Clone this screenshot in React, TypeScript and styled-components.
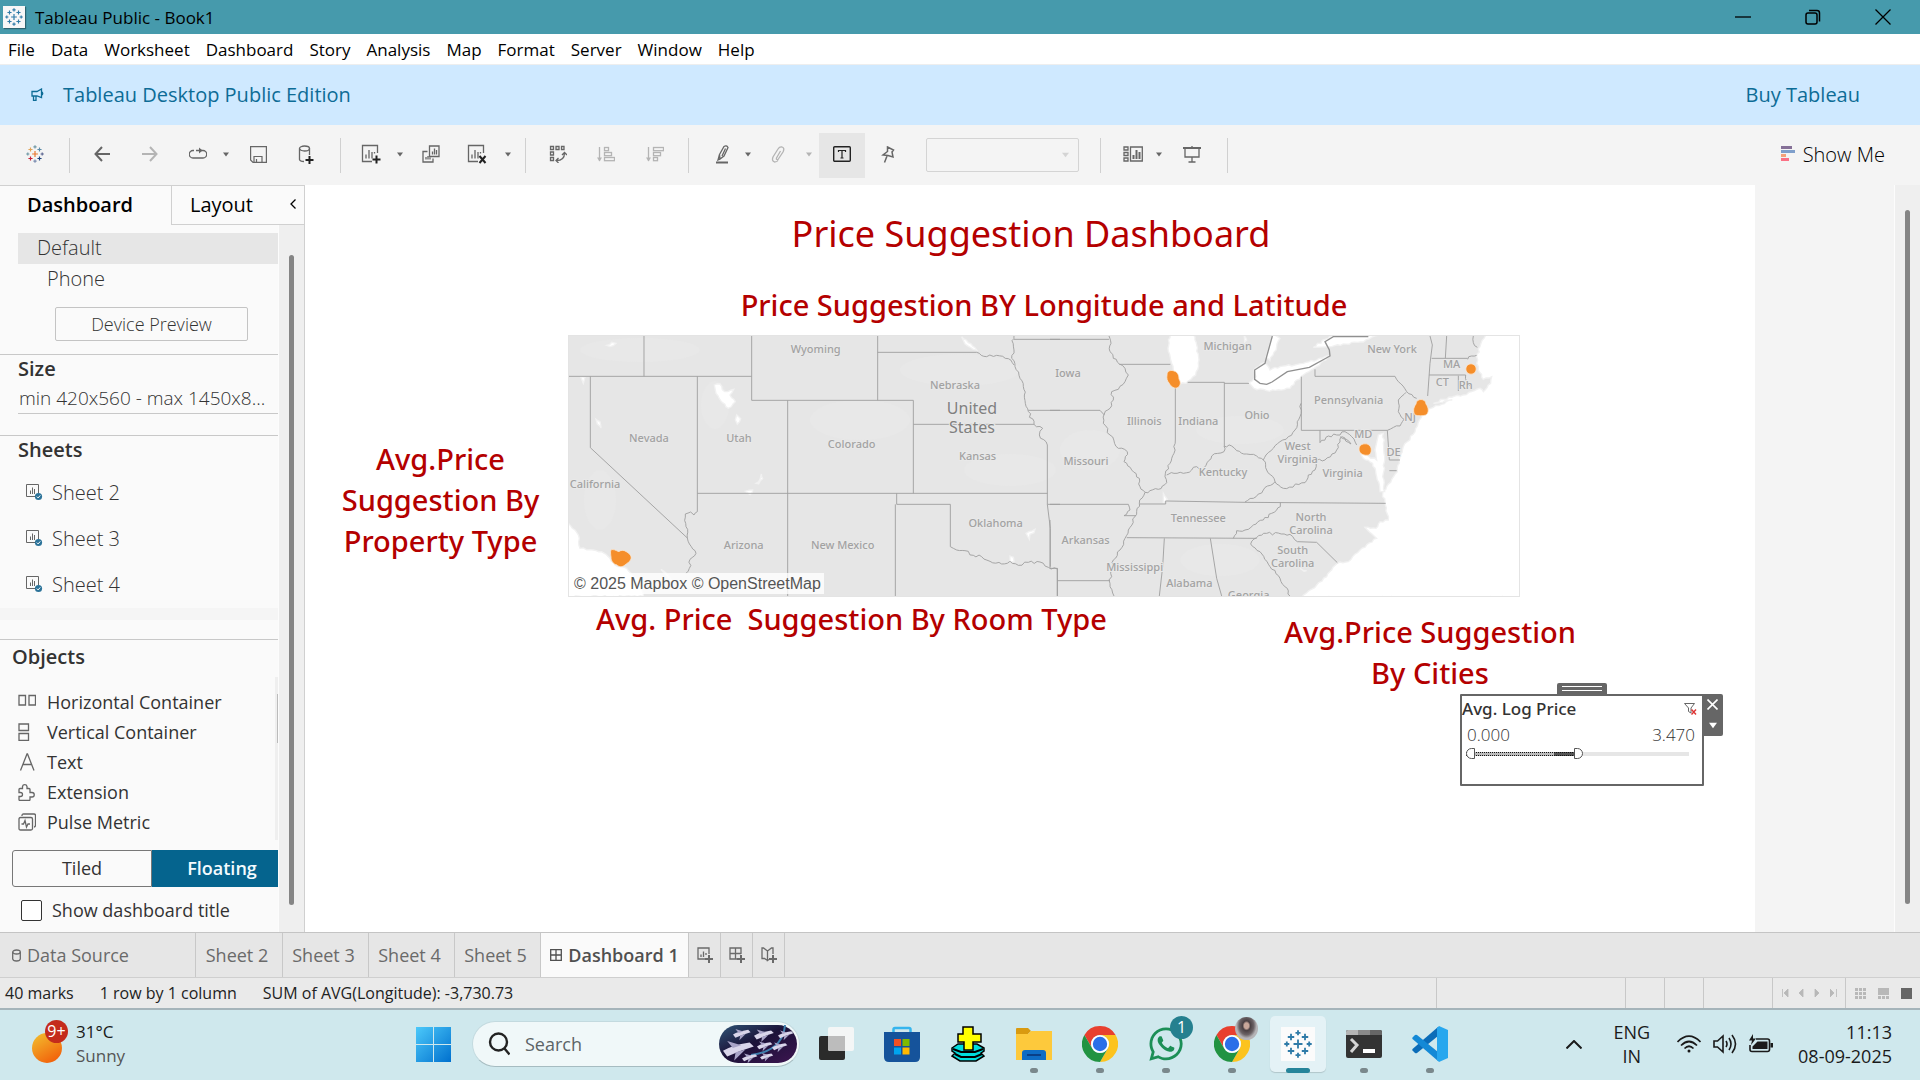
import React, { useState } from "react";
import styled, { createGlobalStyle, css } from "styled-components";
import { FaWhatsapp } from "react-icons/fa";

const UI = `"Open Sans", "Noto Sans", sans-serif`;
const HEADING = `"Noto Sans", "Open Sans", sans-serif`;

const GlobalStyle = createGlobalStyle`
  *, *::before, *::after { box-sizing: border-box; }
  body { margin: 0; font-family: ${UI}; font-size: 17px; color: #333; background: #fff; }
  button, input, select { font: inherit; color: inherit; }
  button { background: none; border: 0; padding: 0; margin: 0; }
  h1, h2, h3, p, ul, dl, dd { margin: 0; padding: 0; font-weight: inherit; font-size: inherit; }
  ul { list-style: none; }
  a { color: inherit; text-decoration: none; }
  svg { display: block; flex: none; }
`;

const Window = styled.div`
  display: flex;
  flex-direction: column;
  min-height: 100vh;
`;

/* ---------- title bar, menu, banner ---------- */

const TitleBar = styled.header`
  display: flex;
  align-items: center;
  height: 34px;
  padding-left: 3px;
  gap: 10px;
  background: #469aac;
  color: #000;
`;
const AppBadge = styled.span`
  display: flex;
  align-items: center;
  justify-content: center;
  width: 22px;
  height: 22px;
  background: #f7f7f7;
  box-shadow: 1px 1px 1px rgba(0, 0, 0, 0.35);
`;
const WindowControls = styled.div`
  display: flex;
  margin: 0 2px 0 auto;
`;
const WindowButton = styled.button`
  display: flex;
  align-items: center;
  justify-content: center;
  width: 70px;
  height: 34px;
`;
const MenuBar = styled.nav`
  display: flex;
  align-items: center;
  height: 31px;
  padding: 1px 8px 0;
  gap: 16px;
  border-bottom: 1px solid #eee;
  background: #fff;
  color: #000;
`;
const MenuItem = styled.button`
  line-height: 24px;
`;
const Banner = styled.div`
  display: flex;
  align-items: center;
  justify-content: space-between;
  height: 60px;
  padding: 0 60px 2px 31px;
  background: #cfe9ff;
  color: #0d6c96;
  font-size: 20px;
`;
const BannerTitle = styled.div`
  display: flex;
  align-items: center;
  gap: 18px;
`;

/* ---------- toolbar ---------- */

const ToolbarRow = styled.div`
  display: flex;
  align-items: center;
  height: 60px;
  padding: 0 35px 0 12px;
  background: #f4f4f4;
`;
const Tool = styled.button<{ $w: number; $on?: boolean; $dim?: boolean }>`
  display: flex;
  align-items: center;
  justify-content: center;
  flex: none;
  width: ${(p) => p.$w}px;
  height: 45px;
  padding-bottom: 2px;
  color: ${(p) => (p.$dim ? "#b4b4b4" : "#666")};
  ${(p) => p.$on && css`margin-left: 5px; background: #e6e6e6; color: #222;`}
`;
const Divider = styled.span`
  flex: none;
  width: 1px;
  height: 35px;
  margin: 0 11px;
  background: #d0d0d0;
`;
const FitBox = styled.div`
  position: relative;
  flex: none;
  width: 153px;
  margin: 0 10px 0 15px;
`;
const FitSelect = styled.select`
  display: block;
  width: 100%;
  height: 34px;
  appearance: none;
  border: 1px solid #d4d4d4;
  border-radius: 2px;
  background: #f4f4f4;
  opacity: 1;
`;
const SelectCaret = styled.span`
  position: absolute;
  right: 10px;
  top: 14px;
  color: #d4d4d4;
`;
const ShowMe = styled.button`
  display: flex;
  align-items: center;
  gap: 8px;
  margin-left: auto;
  padding-bottom: 2px;
  color: #000;
  font-size: 20px;
  font-weight: 300;
`;

/* ---------- main split ---------- */

const Main = styled.main`
  display: flex;
  flex: 1;
  min-height: 0;
`;
const Sidebar = styled.aside`
  display: flex;
  flex-direction: column;
  flex: none;
  width: 305px;
  border-right: 1px solid #d0d0d0;
  background: #fafafa;
`;
const PaneTabs = styled.div`
  display: flex;
  height: 40px;
  border-top: 1px solid #d0d0d0;
  font-size: 20px;
  color: #000;
`;
const PaneTab = styled.button<{ $active?: boolean }>`
  display: flex;
  align-items: center;
  justify-content: space-between;
  flex: ${(p) => (p.$active ? "0 0 171px" : 1)};
  padding: ${(p) => (p.$active ? "0 0 3px 27px" : "0 8px 2px 18px")};
  font-weight: ${(p) => (p.$active ? 600 : 400)};
  border: ${(p) => (p.$active ? 0 : "1px solid #d0d0d0")};
  border-width: ${(p) => (p.$active ? 0 : "0 0 1px 1px")};
`;
const PaneScroll = styled.div`
  display: flex;
  flex: 1;
`;
const PaneBody = styled.div`
  flex: 1;
  min-width: 0;
  overflow: hidden;
`;
const ScrollTrack = styled.div<{ $inset: string }>`
  flex: none;
  display: flex;
  justify-content: center;
  width: 26px;
  padding: ${(p) => p.$inset};
  border-left: 1px solid #fcfcfc;
  background: #efefef;
`;
const ScrollThumb = styled.span`
  width: 5px;
  border-radius: 3px;
  background: #858585;
`;
const DeviceSection = styled.section`
  padding: 8px 0 13px;
  font-size: 20px;
  font-weight: 300;
`;
const DeviceRow = styled.button<{ $active?: boolean }>`
  display: block;
  width: calc(100% - 18px);
  height: 31px;
  margin-left: 18px;
  padding: 0 0 2px ${(p) => (p.$active ? 19 : 29)}px;
  text-align: left;
  line-height: 27px;
  background: ${(p) => (p.$active ? "#e6e6e6" : "none")};
`;
const PreviewButton = styled.button`
  display: block;
  width: 193px;
  height: 34px;
  margin: 12px 0 0 55px;
  border: 1px solid #c4c4c4;
  border-radius: 2px;
  font-size: 18px;
`;
const Section = styled.section`
  border-top: 1px solid #c8c8c8;
`;
const SectionTitle = styled.h2<{ $inset?: number }>`
  padding-left: ${(p) => p.$inset ?? 18}px;
  font-size: 20px;
  font-weight: 600;
  line-height: ${(p) => (p.$inset ? 34 : 28)}px;
`;
const SizeValue = styled.button`
  display: block;
  width: calc(100% - 18px);
  height: 31px;
  margin: 0 0 21px 18px;
  padding: 0 6px 0 1px;
  border-bottom: 1px solid #c8c8c8;
  font-size: 19px;
  font-weight: 300;
  text-align: left;
  line-height: 28px;
  white-space: nowrap;
`;
const SheetList = styled.ul`
  padding-top: 6px;
  font-size: 20px;
  font-weight: 300;
`;
const SheetItem = styled.li`
  display: flex;
  align-items: center;
  gap: 9px;
  height: 46px;
  padding: 0 0 2px 26px;
`;
const ListFoot = styled.div`
  height: 12px;
  margin-bottom: 19px;
  background: #f5f5f5;
`;
const ObjectArea = styled.div`
  display: flex;
  margin-top: 3px;
  padding-bottom: 10px;
`;
const ObjectList = styled.ul`
  flex: 1;
  padding-top: 10px;
  font-size: 18px;
`;
const ObjectItem = styled.li`
  display: flex;
  align-items: center;
  gap: 11px;
  height: 30px;
  padding-left: 18px;
  svg {
    color: #666;
  }
`;
const ThinTrack = styled.span`
  width: 3px;
  height: 163px;
  padding: 17px 0 97px 2px;
  background: #efefef;
  &::before {
    content: "";
    display: block;
    height: 100%;
    background: #bbb;
  }
`;
const ModeSwitch = styled.div`
  display: flex;
  padding-left: 12px;
  height: 37px;
  font-size: 18px;
`;
const ModeButton = styled.button<{ $on?: boolean }>`
  flex: ${(p) => (p.$on ? 1 : "0 0 140px")};
  border: 1px solid ${(p) => (p.$on ? "#05648e" : "#777")};
  border-radius: ${(p) => (p.$on ? 0 : "3px 0 0 3px")};
  background: ${(p) => (p.$on ? "#05648e" : "none")};
  color: ${(p) => (p.$on ? "#f3fbff" : "#333")};
  font-weight: ${(p) => (p.$on ? 600 : 400)};
  padding: 0 0 2px ${(p) => (p.$on ? 14 : 0)}px;
`;
const TitleToggle = styled.label`
  display: flex;
  align-items: center;
  gap: 10px;
  padding: 9px 0 6px 21px;
  font-size: 18px;
  line-height: 29px;
`;
const CheckBox = styled.input`
  appearance: none;
  width: 21px;
  height: 21px;
  margin: 0;
  border: 1px solid #333;
  border-radius: 2px;
  background: #fff;
`;

/* ---------- dashboard canvas ---------- */

const Canvas = styled.div`
  flex: 1;
  min-width: 0;
  background: #fff;
  color: #b40000;
  font-family: ${HEADING};
  font-weight: 500;
`;
const Gutter = styled.div`
  flex: none;
  width: 139px;
  background: #f4f4f4;
`;
const DashTitle = styled.h1`
  padding: 24px 0 1px 2px;
  font-size: 36px;
  font-weight: 400;
  line-height: 50px;
  text-align: center;
`;
const Zones = styled.div`
  display: grid;
  grid-template-columns: 263fr 952fr 235fr;
`;
const ZoneTitle = styled.h2`
  font-size: 29px;
  line-height: 41px;
  text-align: center;
  white-space: pre-line;
`;
const MapTitle = styled(ZoneTitle)`
  grid-column: 2;
  padding: 24px 0 10px;
`;
const SideTitle = styled(ZoneTitle)`
  grid-column: 1;
  align-self: center;
  padding: 66px 0 0 8px;
`;
const MapFrame = styled.figure`
  position: relative;
  margin: 0;
  border: 1px solid #e4e4e4;
`;
const MapCredit = styled.figcaption`
  position: absolute;
  left: 2px;
  bottom: 2px;
  padding: 0 3px;
  background: rgba(255, 255, 255, 0.78);
  color: #555;
  font: 16px/21px "Liberation Sans", Arial, sans-serif;
`;
const LowerZone = styled.div`
  grid-column: 2 / 4;
  display: flex;
  justify-content: space-between;
  padding: 1px 179px 1px 28px;
`;
const RoomTitle = styled(ZoneTitle)`
  white-space: pre;
`;
const CitiesTitle = styled(ZoneTitle)`
  padding-top: 13px;
`;
const FilterCard = styled.section`
  position: relative;
  width: 244px;
  height: 92px;
  margin: 0 51px 0 auto;
  border: 2px solid #666;
  border-radius: 1px;
  background: #fff;
  color: #333;
`;
const Grip = styled.button`
  position: absolute;
  left: 95px;
  top: -13px;
  width: 50px;
  height: 11px;
  border-radius: 2px 2px 0 0;
  background: #666;
  &::after {
    content: "";
    position: absolute;
    inset: 3px 5px;
    border: solid #fff;
    border-width: 1px 0;
  }
`;
const CardTools = styled.div`
  position: absolute;
  left: 240px;
  top: -2px;
  display: flex;
  flex-direction: column;
  width: 21px;
  border-radius: 0 2px 2px 0;
  background: #666;
`;
const CardTool = styled.button`
  display: flex;
  align-items: center;
  justify-content: center;
  height: 21px;
  padding-bottom: 1px;
  color: #fff;
`;
const FilterHead = styled.div`
  display: flex;
  align-items: center;
  justify-content: space-between;
  padding: 0 5px 1px 0;
  font-size: 17px;
  line-height: 26px;
`;
const FilterValues = styled.div`
  display: flex;
  justify-content: space-between;
  padding: 0 7px 0 5px;
  font-family: ${UI};
  font-size: 17px;
  font-weight: 300;
  line-height: 24px;
`;
const RangeBox = styled.div`
  position: relative;
  height: 13px;
  margin: 0 13px 0 4px;
`;
const RangeRail = styled.div`
  position: absolute;
  inset: 5px 0 4px 0;
  background: #e6e6e6;
`;
const RangeFill = styled.div`
  height: 100%;
  border: 1px dotted #111;
  border-width: 1px 0;
  background: linear-gradient(90deg, #bcbcbc 78%, #555 78%);
`;
const RangeInput = styled.input<{ $side: "low" | "high" }>`
  position: absolute;
  inset: 0;
  width: 100%;
  height: 13px;
  margin: 0;
  appearance: none;
  background: none;
  pointer-events: none;
  &::-webkit-slider-thumb {
    appearance: none;
    pointer-events: auto;
    width: 9px;
    height: 11px;
    border: 1px solid #555;
    border-radius: ${(p) => (p.$side === "low" ? "6px 0 0 6px" : "0 6px 6px 0")};
    background: #fff;
  }
`;

/* ---------- sheet tabs and status ---------- */

const SheetTabs = styled.nav`
  display: flex;
  height: 46px;
  border-top: 1px solid #c4c4c4;
  border-bottom: 1px solid #cfcfcf;
  background: #e6e6e6;
  font-size: 18px;
`;
const SheetTab = styled.button<{ $w: number; $active?: boolean; $start?: boolean }>`
  display: flex;
  align-items: center;
  justify-content: ${(p) => (p.$start ? "flex-start" : "center")};
  gap: 6px;
  flex: none;
  width: ${(p) => p.$w}px;
  padding-left: ${(p) => (p.$start ? 12 : 0)}px;
  padding-right: ${(p) => (p.$w < 100 && p.$w > 50 ? 4 : 0)}px;
  border-right: 1px solid #c8c8c8;
  background: ${(p) => (p.$active ? "#fafafa" : "none")};
  font-weight: ${(p) => (p.$active ? 600 : 400)};
  color: ${(p) => (p.$active ? "#505050" : "#6a6a6a")};
  white-space: nowrap;
`;
const StatusBar = styled.footer`
  display: flex;
  align-items: stretch;
  height: 32px;
  border-bottom: 2px solid #a5b4ba;
  background: #eaeaea;
  color: #222;
  font-size: 16px;
  line-height: 30px;
`;
const StatusText = styled.p`
  display: flex;
  gap: 26px;
  flex: 1;
  padding-left: 5px;
`;
const StatusCell = styled.div<{ $w: number }>`
  display: flex;
  align-items: center;
  justify-content: center;
  flex: none;
  width: ${(p) => p.$w}px;
  border-left: 1px solid #c8c8c8;
`;
const NavButton = styled.button`
  display: flex;
  align-items: center;
  justify-content: center;
  width: 16px;
  color: #b8b8b8;
`;
const ViewButton = styled.button`
  display: flex;
  justify-content: center;
  width: 23px;
`;

/* ---------- taskbar ---------- */

const Taskbar = styled.footer`
  display: flex;
  height: 70px;
  background: #cfe8ed;
  color: #1a1a1a;
`;
const Weather = styled.button`
  display: flex;
  align-items: center;
  gap: 6px;
  flex: none;
  width: 400px;
  padding: 0 0 2px 30px;
  text-align: left;
  line-height: 24px;
`;
const Muted = styled.span`
  display: block;
  color: #555;
`;
const AppSlot = styled.button`
  display: flex;
  flex: none;
  width: 66px;
  padding: 6px 5px 8px;
`;
const AppTile = styled.span<{ $active?: boolean; $running?: boolean }>`
  position: relative;
  display: flex;
  align-items: center;
  justify-content: center;
  width: 56px;
  height: 56px;
  border-radius: 5px;
  ${(p) => p.$active && css`background: #e4f2f6; box-shadow: 0 1px 1px rgba(0, 0, 0, 0.15);`}
  &::after {
    content: "";
    position: absolute;
    bottom: -1px;
    left: 50%;
    width: ${(p) => (p.$active ? 24 : 8)}px;
    height: 5px;
    border-radius: 3px;
    transform: translateX(-50%);
    background: ${(p) => (p.$active ? "#25849a" : p.$running ? "#7a888c" : "none")};
  }
`;
const SearchBox = styled.label`
  display: flex;
  align-items: center;
  gap: 15px;
  flex: none;
  width: 328px;
  height: 46px;
  margin: 11px 3px 0 6px;
  padding: 0 2px 0 15px;
  border: 1px solid #c3dadf;
  border-bottom-color: #a6bcc1;
  border-radius: 23px;
  background: #f0f8f9;
  font-size: 18px;
`;
const SearchInput = styled.input`
  flex: 1;
  min-width: 0;
  border: 0;
  padding: 0;
  background: none;
  &::placeholder {
    color: #5c6467;
    opacity: 1;
  }
`;
const Tray = styled.div`
  display: flex;
  align-items: center;
  margin-left: auto;
  padding: 0 28px 2px 0;
  font-size: 18px;
  line-height: 24px;
`;
const TrayButton = styled.button<{ $gap: number }>`
  display: flex;
  gap: 12px;
  align-items: center;
  margin-right: ${(p) => p.$gap}px;
  text-align: center;
`;
const Clock = styled.time`
  text-align: right;
`;
const Badged = styled.span`
  position: relative;
  display: block;
`;
const Badge = styled.span<{ $tone: string }>`
  position: absolute;
  top: -9px;
  right: -8px;
  width: 23px;
  height: 23px;
  border-radius: 50%;
  background: ${(p) => p.$tone};
  color: #fff;
  font-size: 16px;
  line-height: 23px;
  text-align: center;
`;
const WeatherCount = styled(Badge)`
  top: -3px;
  right: 2px;
`;

/* ---------- icons ---------- */

const Line = ({ w, h = w, children, sw = 1.3 }: { w: number; h?: number; sw?: number; children: React.ReactNode }) => (
  <svg width={w} height={h} viewBox={`0 0 ${w} ${h}`} fill="none" stroke="currentColor" strokeWidth={sw}>
    {children}
  </svg>
);

const Caret = ({ size = 6 }: { size?: number }) => (
  <svg width={size} height={size - 1} viewBox="0 0 6 5">
    <path d="M0 0.5H6L3 4.5Z" fill="currentColor" />
  </svg>
);

const plus = (x: number, y: number, r: number) => `M${x - r} ${y}H${x + r}M${x} ${y - r}V${y + r}`;

const TableauMark = ({ size, mono }: { size: number; mono?: boolean }) => {
  const c = (v: string) => (mono ? "#2f7ba8" : v);
  return (
    <svg width={size} height={size} viewBox="0 0 20 20" fill="none" strokeWidth="1.3">
      <path d={plus(10, 10, 3.2)} stroke={c("#e8762d")} />
      <path d={plus(5, 5, 2.3)} stroke={c("#e0a458")} />
      <path d={plus(15, 5, 2.3)} stroke={c("#5c8ca8")} />
      <path d={plus(5, 15, 2.3)} stroke={c("#c72037")} />
      <path d={plus(15, 15, 2.3)} stroke={c("#1f457e")} />
      <path d={plus(10, 2, 1.8)} stroke={c("#7199a6")} />
      <path d={plus(10, 18, 1.8)} stroke={c("#7a8cb0")} />
      <path d={plus(2, 10, 1.8)} stroke={c("#7099a6")} />
      <path d={plus(18, 10, 1.8)} stroke={c("#5b6591")} />
    </svg>
  );
};

const NewSheetIcon = ({ cross }: { cross?: boolean }) => (
  <Line w={20}>
    <path d="M16.5 9V1.5H1.5V17.5H11M5 14.5V10.5M8 14.5V6M11 14.5V8M13.5 9.5V8" />
    <path d={cross ? "M12.5 12L18.5 19M18.5 12L12.5 19" : "M15.5 11.5V19.5M11.5 15.5H19.5"} stroke="#222" strokeWidth="2" />
  </Line>
);

const SheetIcon = () => (
  <svg width="17" height="17" viewBox="0 0 17 17" fill="none" stroke="#666">
    <path d="M9 12.5H0.5V0.5H12.5V9M4.5 10V6.5M6.5 10V3.5M8.5 10V5" />
    <circle cx="12.5" cy="12.5" r="3.6" fill="#2c7399" stroke="none" />
    <path d="M10.8 12.6L12.1 13.9L14.3 11.4" stroke="#fff" />
  </svg>
);

const SortIcon = ({ rows }: { rows: number[] }) => (
  <Line w={18} h={17}>
    <path d="M2.5 1V15" />
    <path d="M0 11.500H5L2.500 15.500Z" fill="currentColor" stroke="none" />
    {rows.map((w, i) => (
      <rect key={i} x="7.5" y={1.5 + i * 5} width={w} height="3.2" />
    ))}
  </Line>
);

const Chrome = () => (
  <svg width="36" height="36" viewBox="0 0 36 36">
    <path d="M2.41 9A18 18 0 0 1 33.59 9H18A9 9 0 0 0 10.2 22.5Z" fill="#e8402f" />
    <path d="M33.59 9A18 18 0 0 1 18 36L25.8 22.5A9 9 0 0 0 18 9Z" fill="#fcc31e" />
    <path d="M18 36A18 18 0 0 1 2.41 9L10.2 22.5A9 9 0 0 0 25.8 22.5Z" fill="#229342" />
    <circle cx="18" cy="18" r="8.8" fill="#fff" />
    <circle cx="18" cy="18" r="7.2" fill="#2a6fe8" />
  </svg>
);

/* ---------- map ---------- */

type Pt = [number, number];
const pts = (s: string): Pt[] => {
  const n = s.trim().split(/\s+/).map(Number);
  const out: Pt[] = [];
  for (let i = 0; i < n.length; i += 2) out.push([n[i], n[i + 1]]);
  return out;
};

/* Breaks each leg of a course into short bends so that rivers and coasts meander. */
const meander = (course: string, amp = 4, close = false) => {
  const p = pts(course);
  let seed = p.length * 7 + p[0][0];
  const rnd = () => {
    seed = (seed * 9301 + 49297) % 233280;
    return seed / 233280 - 0.5;
  };
  let d = `M${p[0][0]} ${p[0][1]}`;
  for (let i = 1; i < p.length; i++) {
    const [x0, y0] = p[i - 1];
    const [x1, y1] = p[i];
    const len = Math.hypot(x1 - x0, y1 - y0);
    const n = Math.max(1, Math.round(len / 9));
    for (let k = 1; k < n; k++) {
      const t = k / n;
      const o = rnd() * amp * 2;
      d += `L${(x0 + (x1 - x0) * t - ((y1 - y0) / len) * o).toFixed(1)} ${(y0 + (y1 - y0) * t + ((x1 - x0) / len) * o).toFixed(1)}`;
    }
    d += `L${x1} ${y1}`;
  }
  return d + (close ? "Z" : "");
};

const WEST_BORDERS =
  "M25 169H575M252 48V169M575 48V241H1060V520M953 48V241M953 97H1250M91 169V383L382 654M412 169V575M683 241V828M412 520H1462M1010 520V553H1171V680M1006 553V828M1060 313H1422M1462 375V553L1471 625V740M1462 553H1500M1362 58H1500M1405 271H1500M1492 745V828";
const WEST_RIVERS = [
  "1250 97 1280 110 1310 106 1345 116 1362 135",
  "412 575 402 585 392 576 376 582 378 620 382 654 394 680 408 700 390 718 388 745 378 760",
  "1362 48 1356 62 1362 90 1355 115 1365 140 1380 175 1390 200 1396 250 1405 275 1422 313 1448 325 1438 345 1462 375",
  "1171 680 1190 690 1215 692 1240 706 1265 710 1290 724 1325 732 1350 724 1375 736 1405 727 1440 726 1465 742 1492 747",
];
const WEST_WATER = [
  "25 610 45 630 58 655 60 685 100 690 125 695 150 715 165 735 200 745 235 780 250 830 20 830",
  "463 195 480 192 494 215 521 208 510 225 526 245 505 265 482 242 468 220",
  "530 285 542 296 532 312 526 300",
  "108 298 120 305 123 324 112 312",
  "62 170 75 172 70 190",
  "604 462 608 476 596 492 588 490 600 478",
  "556 514 578 510 570 524",
  "140 76 155 67 168 70 150 80",
  "1205 50 1225 68 1250 90 1240 88 1215 72",
  "1398 640 1425 628 1422 638 1410 643 1408 658",
  "303 748 325 765 342 785 325 775",
  "1350 708 1360 712 1362 724 1350 726",
];
const EAST_BORDERS =
  "M0 58H177M0 271H150L163 285M208 133H361M376 200V360M413 187H523V378M523 190H597M754 170V331H1012M795 148V169H1035M1012 331L1018 420H1050M810 331V368M268 552H347V543L585 547L1007 550M0 553H235M222 587H258M230 653L620 655M22 782H180M0 600V745H22V828M343 655L338 740L328 828M481 655L500 775L515 828M742 665L800 667L862 728M1145 115H1253M1137 165H1247M1225 167V213M1190 48L1186 115M1140 48L1147 75L1140 130L1133 228M1018 452H1040M691 548V560";
const EAST_RIVERS = [
  "177 48 183 70 180 95 190 115 208 132 225 145 235 165 225 185 205 208 185 215 190 240 180 265 163 282 160 310 180 345 205 385 232 395 222 425 245 450 268 475 270 500 285 517",
  "376 360 372 400 360 430 345 470 350 488 325 508 300 512 285 517",
  "350 465 372 460 400 460 425 450 440 440 455 455 468 436 485 408 522 395 522 378 545 378 560 392 590 402 620 408 640 420 648 405 670 385 690 365 715 350 735 330 750 290 753 250",
  "1035 169 1045 185 1070 215 1100 235",
  "1068 217 1045 240 1045 275 1062 298 1050 318 1012 331",
  "810 368 835 348 860 345 885 335 905 350 920 375",
  "870 350 903 372 875 350 860 390 825 420 800 420 795 450 775 465 765 488 700 505 675 485 650 450 640 420",
  "675 485 640 510 610 535 585 546",
  "235 553 240 570 222 587",
  "285 517 268 550 255 590 235 630 225 655 210 690 190 720 182 760 180 790 192 828",
  "691 560 665 580 640 600 610 615 585 630 560 632 550 655",
  "620 653 650 640 720 643 742 665",
  "620 653 602 672 630 695 660 740 690 775 705 800 720 828",
  "1253 118 1265 108 1280 106",
  "1270 48 1270 68 1282 82",
  "1247 165 1250 185 1260 198",
];
const EAST_WATER = [
  "361 44 354 85 362 120 370 150 378 190 408 190 437 165 447 120 440 75 430 44",
  "597 188 618 170 612 150 642 128 660 150 690 140 760 130 800 120 840 108 800 140 740 180 720 205 650 212 612 205",
  "668 44 690 55 680 80 660 122 648 112",
  "790 82 825 58 850 46 985 46 940 66 880 72 845 80",
  "1307 44 1290 80 1280 110 1285 150 1300 178 1325 170 1322 190 1300 215 1290 205 1240 225 1180 238 1150 250 1207 240 1150 262 1130 268 1108 300 1095 335 1060 380 1048 420 1042 455 1010 500 998 522 1005 545 1015 600 990 605 978 625 945 622 980 655 930 690 895 725 862 730 830 770 800 795 755 832 1412 832 1412 44",
  "985 345 1000 340 1001 380 1004 420 998 470 1004 515 990 515 980 470 968 430 940 415 932 400 955 408 980 420 975 390",
  "340 520 352 538 340 548",
  "750 745 770 752 762 754",
  "583 48 590 60 584 66",
];

type Label = [number, number, string];
const WEST_LABELS: Label[] = [
  [767, 98, "Wyoming"], [1185, 207, "Nebraska"], [267, 367, "Nevada"], [537, 367, "Utah"], [875, 384, "Colorado"],
  [1253, 419, "Kansas"], [105, 504, "California"], [1307, 621, "Oklahoma"], [551, 688, "Arizona"], [848, 688, "New Mexico"],
];
const EAST_LABELS: Label[] = [
  [54, 172, "Iowa"], [533, 90, "Michigan"], [1026, 98, "New York"], [1205, 145, "MA"], [1177, 199, "CT"], [1247, 208, "Rh"],
  [896, 253, "Pennsylvania"], [283, 315, "Illinois"], [445, 315, "Indiana"], [621, 297, "Ohio"], [1080, 304, "NJ"],
  [940, 355, "MD"], [1031, 408, "DE"], [743, 391, "West"], [743, 430, "Virginia"], [108, 436, "Missouri"],
  [519, 469, "Kentucky"], [878, 470, "Virginia"], [445, 606, "Tennessee"], [783, 603, "North"], [783, 642, "Carolina"],
  [107, 672, "Arkansas"], [728, 701, "South"], [728, 740, "Carolina"], [254, 753, "Mississippi"], [418, 802, "Alabama"], [596, 838, "Georgia"],
];

const MapSvg = styled.svg`
  display: block;
  width: 100%;
  height: auto;
`;
const MapLabel = styled.text<{ $big?: boolean }>`
  font-family: ${HEADING};
  font-size: ${(p) => (p.$big ? 48 : 33)}px;
  font-weight: ${(p) => (p.$big ? 400 : 500)};
  fill: ${(p) => (p.$big ? "#808080" : "#a2a2a2")};
  stroke: #e9e9e9;
  stroke-width: 6px;
  paint-order: stroke;
  text-anchor: middle;
`;

const Region = ({ x, borders, rivers, water, labels }: { x: number; borders: string; rivers: string[]; water: string[]; labels: Label[] }) => (
  <g transform={`translate(${x} 320) scale(0.33333)`} fill="none" stroke="#a0a0a0" strokeWidth="2.8">
    {water.map((w) => (
      <path key={w} d={meander(w, 3, true)} fill="#fff" stroke="#f1f1f1" strokeWidth="4" />
    ))}
    <path d={borders} />
    {rivers.map((r) => (
      <path key={r} d={meander(r, 4)} />
    ))}
    {labels.map(([lx, ly, t]) => (
      <MapLabel key={t + lx + ly} x={lx} y={ly}>{t}</MapLabel>
    ))}
  </g>
);

const UsMap = () => (
  <MapSvg viewBox="569 336 950 260" role="img" aria-label="Price suggestion by longitude and latitude">
    <rect x="569" y="336" width="950" height="260" fill="#e6e6e6" />
    <g fill="#e8e8e8">
      <ellipse cx="640" cy="350" rx="60" ry="12" />
      <ellipse cx="715" cy="405" rx="14" ry="24" />
      <ellipse cx="860" cy="420" rx="50" ry="20" />
      <ellipse cx="960" cy="370" rx="60" ry="16" />
      <ellipse cx="1010" cy="470" rx="46" ry="16" />
      <ellipse cx="600" cy="500" rx="16" ry="30" />
      <ellipse cx="1090" cy="450" rx="30" ry="20" />
      <ellipse cx="1240" cy="430" rx="44" ry="14" />
      <ellipse cx="1220" cy="560" rx="40" ry="16" />
    </g>
    <Region x={560} borders={WEST_BORDERS} rivers={WEST_RIVERS} water={WEST_WATER} labels={WEST_LABELS} />
    <Region x={1050} borders={EAST_BORDERS} rivers={EAST_RIVERS} water={EAST_WATER} labels={EAST_LABELS} />
    <g transform="translate(1050 320) scale(0.33333)" fill="none" stroke="#909090" strokeWidth="4">
      <path d="M667 48L650 110L645 130L614 150V178L630 190L650 193L666 186L712 155L778 142L840 108L838 90L825 65L850 50H955" />
    </g>
    <g transform="translate(560 320) scale(0.33333)">
      <MapLabel $big x="1236" y="281">United</MapLabel>
      <MapLabel $big x="1236" y="339">States</MapLabel>
    </g>
    <g fill="#f58e2a" stroke="#fbe6d0" strokeWidth="0.8">
      <path d="M612 549.500C616 549.500 617 551.500 619 551.500C621 550 624 550 626 551.500C629 553 632 556 631 559C630 562 627 563 625 565C622 567.500 619 567 617 565C613 564 611 561 611 557C610.500 553 610 550 612 549.500Z" />
      <path d="M1167 375C1167 370 1172 370 1174 371C1178 372 1179 376 1179 379C1181 382 1181 386 1177 388C1173 389 1170 385 1169 383C1167 381 1166.500 378 1167 375Z" />
      <circle cx="1471" cy="369" r="5.200" />
      <path d="M1416 404C1416 398 1426 398 1426 404C1429 408 1429 413 1426 415C1423 416 1418 416 1415 415C1413 412 1413 408 1416 404Z" />
      <path d="M1359 449C1359 443 1367 443 1369 445C1372 447 1372 453 1369 455C1364 456 1359 454 1359 449Z" />
    </g>
  </MapSvg>
);

/* ---------- pieces ---------- */

const MENUS = ["File", "Data", "Worksheet", "Dashboard", "Story", "Analysis", "Map", "Format", "Server", "Window", "Help"];

const Spacer = styled(Divider)`
  margin: 0 7px;
`;

const Toolbar = () => (
  <ToolbarRow role="toolbar">
    <Tool $w={46} aria-label="Start page"><TableauMark size={18} /></Tool>
    <Divider />
    <Tool $w={42} aria-label="Undo"><Line w={16} sw={2}><path d="M16 8H2M8 1L1.500 8L8 15" /></Line></Tool>
    <Tool $w={54} $dim aria-label="Redo"><Line w={16} sw={2}><path d="M0 8H14M8 1L14.500 8L8 15" /></Line></Tool>
    <Tool $w={42} aria-label="Replay"><Line w={18} h={14}><path d="M5 3.500H4A3.500 3.500 0 0 0 4 11H14A3.500 3.500 0 0 0 14 3.500H7" /><path d="M10 0.500V6.500L13.500 3.500Z" fill="currentColor" stroke="none" /></Line></Tool>
    <Tool $w={14} aria-label="Replay options"><Caret /></Tool>
    <Tool $w={50} aria-label="Save"><Line w={17} sw={1.2}><path d="M0.600 0.600H16.400V16.400H3L0.600 14ZM4 16V10.500H12V16M6.500 16V13" /></Line></Tool>
    <Tool $w={46} aria-label="New data source"><Line w={16} h={19}><ellipse cx="6.500" cy="3.500" rx="5" ry="2.500" /><path d="M1.500 3.500V14.500Q2 16.500 6 16.500M11.500 3.500V10" /><path d="M11.500 11V19M7.500 15H15.500" stroke="#222" strokeWidth="2" /></Line></Tool>
    <Divider />
    <Tool $w={38} aria-label="New worksheet"><NewSheetIcon /></Tool>
    <Tool $w={20} aria-label="New worksheet options"><Caret /></Tool>
    <Tool $w={42} aria-label="Duplicate"><Line w={18}><path d="M7.500 1H17V11.500H7.500ZM10.500 9.500V6.500M12.500 9.500V3.500M14.500 9.500V5M5.500 6.500H1V17H11V13.500M4 14.500V12M6 14.500V11M8 14.500V12.500" /></Line></Tool>
    <Tool $w={50} aria-label="Clear sheet"><NewSheetIcon cross /></Tool>
    <Tool $w={12} aria-label="Clear options"><Caret /></Tool>
    <Divider />
    <Tool $w={42} aria-label="Swap rows and columns"><Line w={18}><path d="M1.500 1.500H4.500V4.500H1.500ZM7 1.500H10V4.500H7ZM12.500 1.500H15V4.500H12.500ZM1.500 7H4.500V10H1.500ZM1.500 12.500H4.500V15.500H1.500ZM15.500 8Q15.500 15.500 7.500 15.500M13 10L15.500 7.500L18 10M9.500 13L7 15.500L9.500 18" /></Line></Tool>
    <Tool $w={54} $dim aria-label="Sort ascending"><SortIcon rows={[4, 7, 10]} /></Tool>
    <Tool $w={44} $dim aria-label="Sort descending"><SortIcon rows={[10, 7, 4]} /></Tool>
    <Divider />
    <Tool $w={44} aria-label="Highlight"><Line w={15} h={19}><path d="M4.500 9.500L9 1.500Q11.500 0 13 2.500L9 11L5 14ZM4.500 9.500L3 15L5 14M10.500 3.500L7 11" /><path d="M1 17.500H13" strokeWidth="2" /></Line></Tool>
    <Tool $w={8} aria-label="Highlight options"><Caret /></Tool>
    <Tool $w={52} $dim aria-label="Group"><Line w={14} h={17}><path d="M9.500 5L5.500 12Q5 14 7 13.500L12 6Q14 2 11 1Q8.500 0.500 7 3L2 11Q0.500 15 3.500 16Q6 16 7 14.500" /></Line></Tool>
    <Tool $w={10} $dim aria-label="Group options"><Caret /></Tool>
    <Tool $w={46} $on aria-label="Show mark labels"><Line w={18} h={16} sw={1.4}><rect x="0.700" y="0.700" width="16.600" height="14.600" rx="1" /><path d="M5.500 6V4.500H12.500V6M9 4.500V12M7.500 12H10.500" strokeWidth="1.200" /></Line></Tool>
    <Tool $w={46} aria-label="Fix axes"><Line w={14} h={17} sw={1.5}><path d="M6.500 1L12.500 4L11 6L12 11L7 9.500L2 9L6.500 5.500ZM6 10L3.500 16.500" /></Line></Tool>
    <FitBox>
      <FitSelect aria-label="Fit" disabled><option></option></FitSelect>
      <SelectCaret><Caret size={7} /></SelectCaret>
    </FitBox>
    <Divider />
    <Tool $w={42} aria-label="Show cards"><Line w={20} h={16}><path d="M7.500 1H19.300V15H7.500ZM1 1H5V4H1ZM1 6.500H5V9.500H1ZM1 12H5V15H1Z" /><path d="M10.500 13V9M13.500 13V4M16.500 13V6" strokeWidth="2" /></Line></Tool>
    <Tool $w={10} aria-label="Card options"><Caret /></Tool>
    <Tool $w={56} aria-label="Presentation mode"><Line w={18} h={17}><path d="M2 2V11H16V2M9 11V16M5.500 16H12.500M9 0V2" /><path d="M0 2H18" strokeWidth="2" /></Line></Tool>
    <Spacer />
    <ShowMe>
      <svg width="14" height="16" viewBox="0 0 14 16">
        <path d="M0 0H11V3H0Z" fill="#857097" /><path d="M0 4H14V7H0Z" fill="#7f9fcb" />
        <path d="M0 8H5V11H0Z" fill="#f5a27a" /><path d="M0 12H8V15H0Z" fill="#fb7185" />
      </svg>
      Show Me
    </ShowMe>
  </ToolbarRow>
);

const OBJECTS: [string, React.ReactNode][] = [
  ["Horizontal Container", <path d="M1 2.500H7.500V12H1ZM11 2.500H17.500V12H11Z" />],
  ["Vertical Container", <path d="M1 1H10.500V7.500H1ZM1 10.500H10.500V17.500H1Z" />],
  ["Text", <path d="M2.500 17.500L9 1H9.500L16 17.500M5 11.500H13.500" />],
  ["Extension", <path d="M1 6.500Q1 5.500 2 5.500H4.500V3.500A2.300 2.300 0 0 1 9 3.500V5.500H11Q12 5.500 12 6.500V9.500H14A2.200 2.200 0 0 1 14 14H12V16.500Q12 17.500 11 17.500H2Q1 17.500 1 16.500V13.500H2.500A2 2 0 0 0 2.500 9.500H1Z" />],
  ["Pulse Metric", <path d="M2.500 4.500H13Q14.500 4.500 14.500 6V15.500Q14.500 17 13 17H2.500Q1 17 1 15.500V6Q1 4.500 2.500 4.500ZM4 3V2.500Q4 1 5.500 1H16Q17.500 1 17.500 2.500V12Q17.500 14 16 14M3.500 11H5.500L7 7.500L8.500 14L10 11H12" />],
];

const SidePane = () => {
  const [mode, setMode] = useState("Floating");
  return (
    <Sidebar>
      <PaneTabs>
        <PaneTab $active>Dashboard</PaneTab>
        <PaneTab>Layout <Line w={6} h={10}><path d="M5.500 0.500L1 5L5.500 9.500" /></Line></PaneTab>
      </PaneTabs>
      <PaneScroll>
        <PaneBody>
          <DeviceSection>
            <DeviceRow $active>Default</DeviceRow>
            <DeviceRow>Phone</DeviceRow>
            <PreviewButton>Device Preview</PreviewButton>
          </DeviceSection>
          <Section>
            <SectionTitle>Size</SectionTitle>
            <SizeValue>min 420x560 - max 1450x8...</SizeValue>
          </Section>
          <Section>
            <SectionTitle>Sheets</SectionTitle>
            <SheetList>
              {["Sheet 2", "Sheet 3", "Sheet 4"].map((s) => (
                <SheetItem key={s}><SheetIcon />{s}</SheetItem>
              ))}
            </SheetList>
            <ListFoot />
          </Section>
          <Section>
            <SectionTitle $inset={12}>Objects</SectionTitle>
            <ObjectArea>
              <ObjectList>
                {OBJECTS.map(([name, icon]) => (
                  <ObjectItem key={name}>
                    <Line w={18}>{icon}</Line>
                    {name}
                  </ObjectItem>
                ))}
              </ObjectList>
              <ThinTrack />
            </ObjectArea>
            <ModeSwitch>
              {["Tiled", "Floating"].map((m) => (
                <ModeButton key={m} $on={m === mode} onClick={() => setMode(m)}>{m}</ModeButton>
              ))}
            </ModeSwitch>
            <TitleToggle><CheckBox type="checkbox" />Show dashboard title</TitleToggle>
          </Section>
        </PaneBody>
        <ScrollTrack $inset="30px 0 27px"><ScrollThumb /></ScrollTrack>
      </PaneScroll>
    </Sidebar>
  );
};

const PriceFilter = () => {
  const [low, setLow] = useState(0);
  const [high, setHigh] = useState(50.5);
  return (
    <FilterCard>
      <Grip aria-label="Move" />
      <CardTools>
        <CardTool aria-label="Remove"><Line w={11} sw={1.6}><path d="M0.500 0.500L10.500 10.500M10.500 0.500L0.500 10.500" /></Line></CardTool>
        <CardTool aria-label="More options"><Caret size={8} /></CardTool>
      </CardTools>
      <FilterHead>
        <h3>Avg. Log Price</h3>
        <svg width="13" height="12" viewBox="0 0 13 12" fill="none">
          <path d="M0.500 0.500H10.500L7 5V10L4.500 8.500V5Z" stroke="#666" />
          <path d="M7.500 6.500L12 11.500M12 6.500L7.500 11.500" stroke="#d33" strokeWidth="1.400" />
        </svg>
      </FilterHead>
      <FilterValues><span>0.000</span><span>3.470</span></FilterValues>
      <RangeBox>
        <RangeRail><RangeFill style={{ marginLeft: `${low}%`, width: `${high - low}%` }} /></RangeRail>
        <RangeInput $side="low" type="range" step="0.5" value={low} onChange={(e) => setLow(Math.min(+e.target.value, high))} aria-label="Lowest price" />
        <RangeInput $side="high" type="range" step="0.5" value={high} onChange={(e) => setHigh(Math.max(+e.target.value, low))} aria-label="Highest price" />
      </RangeBox>
    </FilterCard>
  );
};

const SearchArt = () => (
  <svg width="78" height="38" viewBox="0 0 78 38">
    <defs>
      <linearGradient id="sky" x1="0" y1="0" x2="1" y2="1">
        <stop offset="0" stopColor="#2f5577" /><stop offset="0.450" stopColor="#1b1238" /><stop offset="1" stopColor="#3d1550" />
      </linearGradient>
      <g id="ship"><path d="M-10 2Q-4 -2 9 -4L12 -1Q2 2 -7 6Z" fill="#d9d5ea" /><path d="M-3 0L-7 -5L3 -2ZM-1 3L-2 9L6 1Z" fill="#a9a4c8" /></g>
    </defs>
    <rect width="78" height="38" rx="19" fill="url(#sky)" />
    <path d="M66 0Q64 26 32 30" fill="none" stroke="#3f7fae" strokeWidth="2" />
    <use href="#ship" transform="translate(18 23) scale(1.400)" />
    <use href="#ship" transform="translate(22 8) scale(0.800)" />
    <use href="#ship" transform="translate(44 9) scale(0.900)" />
    <use href="#ship" transform="translate(66 9) scale(0.700)" />
    <use href="#ship" transform="translate(45 20) scale(0.700)" />
    <use href="#ship" transform="translate(60 21) scale(0.700)" />
    <use href="#ship" transform="translate(30 32) scale(0.700)" />
    <use href="#ship" transform="translate(47 31) scale(0.600)" />
  </svg>
);

const APPS: { name: string; running?: boolean; active?: boolean; icon: React.ReactNode }[] = [
  { name: "Task view", icon: <svg width="36" height="36" viewBox="0 0 36 36"><rect x="1" y="10" width="26" height="24" rx="2" fill="#2b2b2b" /><rect x="10" y="1" width="26" height="24" rx="2" fill="#f4f6f6" /><path d="M10 10H27V25H12Q10 25 10 23Z" fill="#bcbcbc" /></svg> },
  { name: "Microsoft Store", icon: <svg width="36" height="36" viewBox="0 0 36 36"><path d="M9.500 8V3.500Q9.500 2 11 2H25Q26.500 2 26.500 3.500V8" fill="none" stroke="#35b5ee" strokeWidth="2.500" /><path d="M0 6H36V31Q36 36 31 36H5Q0 36 0 31Z" fill="#15539b" /><path d="M10 13H17V20H10Z" fill="#f25022" /><path d="M18.500 13H25.500V20H18.500Z" fill="#7fba00" /><path d="M10 21.500H17V28.500H10Z" fill="#00a4ef" /><path d="M18.500 21.500H25.500V28.500H18.500Z" fill="#ffb900" /></svg> },
  { name: "Database", icon: <svg width="36" height="38" viewBox="0 0 36 38"><path d="M2 23L8 19H27L34 23V26L31 28L34 31L26 36H10L2 31L5 28L2 26Z" fill="#0dd" stroke="#000" strokeWidth="1.500" /><path d="M3 24L11 27H25L33 24M5 29L11 32H25L32 29" fill="none" stroke="#000" strokeWidth="2" /><path d="M13 2H23V9H31V17H23V25H14V17H8V9H13Z" fill="#ff0" stroke="#000" strokeWidth="1.500" /></svg> },
  { name: "File Explorer", running: true, icon: <svg width="36" height="34" viewBox="0 0 36 34"><path d="M0 2Q0 1 1 1H12L15 4L12 7H0Z" fill="#d99a10" /><path d="M0 7H12L15 4H36V33H0Z" fill="#fdc93c" /><path d="M6 33V26Q6 23 9 23H27Q30 23 30 26V33Z" fill="#0e6cc4" /><path d="M11 28H25" stroke="#0a3f86" strokeWidth="2" /></svg> },
  { name: "Chrome", running: true, icon: <Chrome /> },
  { name: "WhatsApp", running: true, icon: <Badged><FaWhatsapp size={38} color="#1c8f57" /><Badge $tone="#25808f">1</Badge></Badged> },
  { name: "Chrome profile", running: true, icon: <Badged><Chrome /><Badge $tone="radial-gradient(ellipse at 50% 38%, #c9a79a 14%, #4a4043 24%, #6b6265 45%, #b5b3b6 62%)" /></Badged> },
  { name: "Tableau", active: true, icon: <svg width="34" height="34" viewBox="0 0 34 34"><rect width="34" height="34" fill="#fbfbfb" /><g transform="translate(3 3)"><TableauMark size={28} mono /></g></svg> },
  { name: "Terminal", running: true, icon: <svg width="36" height="28" viewBox="0 0 36 28"><rect width="36" height="28" rx="2" fill="#333" /><path d="M0 5V2Q0 0 2 0H12V5Z" fill="#b5b5b5" /><path d="M12 0H24V5H12Z" fill="#8a8a8a" /><path d="M24 0H34Q36 0 36 2V5H24Z" fill="#666" /><path d="M5 9L11 15L5 22" fill="none" stroke="#d4d4d4" strokeWidth="3" /><path d="M17 19H29V23H17Z" fill="#fff" /></svg> },
  { name: "Visual Studio Code", running: true, icon: <svg width="36" height="36" viewBox="0 0 36 36"><path d="M26 1V10L5 27Q4 27.500 3 27L0.500 24.500Q0 24 0.500 23Z" fill="#0b6cb8" /><path d="M26 35V26L5 9Q4 8.500 3 9L0.500 11.500Q0 12 0.500 13Z" fill="#1489d6" /><path d="M27 0L36 4V32L27 36L25 34V2Z" fill="#28a7ee" /></svg> },
];

export default function App() {
  return (
    <Window>
      <GlobalStyle />
      <TitleBar>
        <AppBadge><TableauMark size={18} mono /></AppBadge>
        <span>Tableau Public - Book1</span>
        <WindowControls>
          <WindowButton aria-label="Minimize"><Line w={16} h={2}><path d="M0 1H16" /></Line></WindowButton>
          <WindowButton aria-label="Restore"><Line w={16} sw={1.5}><rect x="1" y="4" width="11" height="11" rx="2" /><path d="M4 1.500H12Q14.500 1.500 14.500 4V12.500" /></Line></WindowButton>
          <WindowButton aria-label="Close"><Line w={16}><path d="M0.500 0.500L15.500 15.500M15.500 0.500L0.500 15.500" /></Line></WindowButton>
        </WindowControls>
      </TitleBar>
      <MenuBar>{MENUS.map((m) => <MenuItem key={m}>{m}</MenuItem>)}</MenuBar>
      <Banner>
        <BannerTitle>
          <Line w={14} h={13}><path d="M1 3.500H6L10.500 1V9.500L6 8H1ZM2.500 8V12.500H5V8M10.500 3.500Q13 5.500 10.500 7.500" /></Line>
          Tableau Desktop Public Edition
        </BannerTitle>
        <a href="#buy">Buy Tableau</a>
      </Banner>
      <Toolbar />
      <Main>
        <SidePane />
        <Canvas>
          <DashTitle>Price Suggestion Dashboard</DashTitle>
          <Zones>
            <MapTitle>Price Suggestion BY Longitude and Latitude</MapTitle>
            <SideTitle>{"Avg.Price\nSuggestion By\nProperty Type"}</SideTitle>
            <MapFrame>
              <UsMap />
              <MapCredit>© 2025 Mapbox © OpenStreetMap</MapCredit>
            </MapFrame>
            <LowerZone>
              <RoomTitle>{"Avg. Price  Suggestion By Room Type"}</RoomTitle>
              <CitiesTitle>{"Avg.Price Suggestion\nBy Cities"}</CitiesTitle>
            </LowerZone>
          </Zones>
          <PriceFilter />
        </Canvas>
        <Gutter />
        <ScrollTrack $inset="25px 0 28px"><ScrollThumb /></ScrollTrack>
      </Main>
      <SheetTabs>
        <SheetTab $w={196} $start><Line w={9} h={13}><ellipse cx="4.500" cy="3" rx="3.800" ry="2" /><path d="M0.700 3V10Q1 12 4.500 12Q8 12 8.300 10V3" /></Line>Data Source</SheetTab>
        <SheetTab $w={87}>Sheet 2</SheetTab>
        <SheetTab $w={86}>Sheet 3</SheetTab>
        <SheetTab $w={86}>Sheet 4</SheetTab>
        <SheetTab $w={86}>Sheet 5</SheetTab>
        <SheetTab $w={148} $active><Line w={12}><path d="M0.700 0.700H11.300V11.300H0.700ZM6 1V11M1 6H11" /></Line>Dashboard 1</SheetTab>
        <SheetTab $w={32} aria-label="New worksheet"><Line w={16}><path d="M12 7V1H1V12H8M4 10V7.500M6.500 10V4.500M9 8V6" /><path d="M12 8V16M8 12H16" strokeWidth="2" /></Line></SheetTab>
        <SheetTab $w={32} aria-label="New dashboard"><Line w={16}><path d="M12 7V1H1V12H8M6.500 1V12M1 6.500H12" /><path d="M12 8V16M8 12H16" strokeWidth="2" /></Line></SheetTab>
        <SheetTab $w={32} aria-label="New story"><Line w={16}><path d="M6.500 4L2.500 1H1V11.500H3.500L6.500 13.500M6.500 4L10.500 1H12V7M6.500 4V13.500L8 12.500" /><path d="M12 8V16M8 12H16" strokeWidth="2" /></Line></SheetTab>
      </SheetTabs>
      <StatusBar>
        <StatusText><span>40 marks</span><span>1 row by 1 column</span><span>SUM of AVG(Longitude): -3,730.73</span></StatusText>
        <StatusCell $w={189} />
        <StatusCell $w={39} />
        <StatusCell $w={39} />
        <StatusCell $w={69} />
        <StatusCell $w={73}>
          {["M0.500 0V8M6 0V8L2 4Z", "M5 0V8L1 4Z", "M1 0V8L5 4Z", "M0 0V8L4 4ZM6.500 0V8"].map((d, i) => (
            <NavButton key={d} aria-label={["First", "Previous", "Next", "Last"][i]}>
              <svg width="7" height="8" viewBox="0 0 7 8"><path d={d} fill="#b8b8b8" stroke="#b8b8b8" strokeWidth="0.800" /></svg>
            </NavButton>
          ))}
        </StatusCell>
        <StatusCell $w={75}>
          <ViewButton aria-label="Sheet sorter"><svg width="11" height="11" viewBox="0 0 11 11" fill="#b8b8b8"><path d="M0 0H3V3H0ZM4 0H7V3H4ZM8 0H11V3H8ZM0 4H3V7H0ZM4 4H7V7H4ZM8 4H11V7H8ZM0 8H3V11H0ZM4 8H7V11H4ZM8 8H11V11H8Z" /></svg></ViewButton>
          <ViewButton aria-label="Filmstrip"><svg width="11" height="11" viewBox="0 0 11 11" fill="#b8b8b8"><path d="M0 0H11V7H0ZM0 8H3V11H0ZM4 8H7V11H4ZM8 8H11V11H8Z" /></svg></ViewButton>
          <ViewButton aria-label="Tabs"><svg width="11" height="11"><rect width="11" height="11" fill="#666" /></svg></ViewButton>
        </StatusCell>
      </StatusBar>
      <Taskbar>
        <Weather>
          <Badged>
            <svg width="40" height="42" viewBox="0 0 40 42">
              <defs><linearGradient id="sun" x1="0" y1="0" x2="0.600" y2="1"><stop offset="0" stopColor="#f2c230" /><stop offset="1" stopColor="#f2640c" /></linearGradient></defs>
              <circle cx="17" cy="25" r="15" fill="url(#sun)" />
            </svg>
            <WeatherCount $tone="#c42b1c">9+</WeatherCount>
          </Badged>
          <span>31°C<Muted>Sunny</Muted></span>
        </Weather>
        <AppSlot aria-label="Start">
          <AppTile><svg width="35" height="35" viewBox="0 0 35 35"><defs><linearGradient id="win" x1="0" y1="0" x2="1" y2="1"><stop offset="0" stopColor="#4cc9fa" /><stop offset="1" stopColor="#0070ce" /></linearGradient></defs><path d="M0 0H17V17H0ZM18 0H35V17H18ZM0 18H17V35H0ZM18 18H35V35H18Z" fill="url(#win)" /></svg></AppTile>
        </AppSlot>
        <SearchBox>
          <svg width="22" height="24" viewBox="0 0 22 24" fill="none" stroke="#222" strokeWidth="2.400"><circle cx="10.500" cy="10" r="8.500" /><path d="M16.500 16.500L21.500 22.500" /></svg>
          <SearchInput placeholder="Search" aria-label="Search" />
          <SearchArt />
        </SearchBox>
        {APPS.map((a) => (
          <AppSlot key={a.name} aria-label={a.name}>
            <AppTile $active={a.active} $running={a.running}>{a.icon}</AppTile>
          </AppSlot>
        ))}
        <Tray>
          <TrayButton $gap={31} aria-label="Hidden icons"><Line w={16} h={9} sw={2}><path d="M0.500 8.500L8 1L15.500 8.500" /></Line></TrayButton>
          <TrayButton $gap={27}>ENG<br />IN</TrayButton>
          <TrayButton $gap={25} aria-label="Network, sound and battery">
            <Line w={24} h={18} sw={1.7}><path d="M0.500 7Q12 -4.500 23.500 7M4 10.500Q12 2.500 20 10.500M7.500 13.500Q12 9 16.500 13.500" /><circle cx="12" cy="16" r="1.500" fill="currentColor" stroke="none" /></Line>
            <Line w={24} h={20} sw={1.6}><path d="M1 7H4.500L10 2V18L4.500 13H1ZM13 7Q15 10 13 13M16 4Q20 10 16 16M19 1Q26 10 19 19" /></Line>
            <Line w={24} h={20} sw={1.6}><path d="M7 5H18.500Q20.500 5 20.500 7V15.500Q20.500 17.500 18.500 17.500H3Q1 17.500 1 15.500V11" /><path d="M8.500 7.500H18.500V15H3.500V12.500ZM21.500 9H24V13.500H21.500ZM4 0L0 6.500H3L2 11L7 4.500H4Z" fill="currentColor" stroke="none" /></Line>
          </TrayButton>
          <Clock>11:13<br />08-09-2025</Clock>
        </Tray>
      </Taskbar>
    </Window>
  );
}
